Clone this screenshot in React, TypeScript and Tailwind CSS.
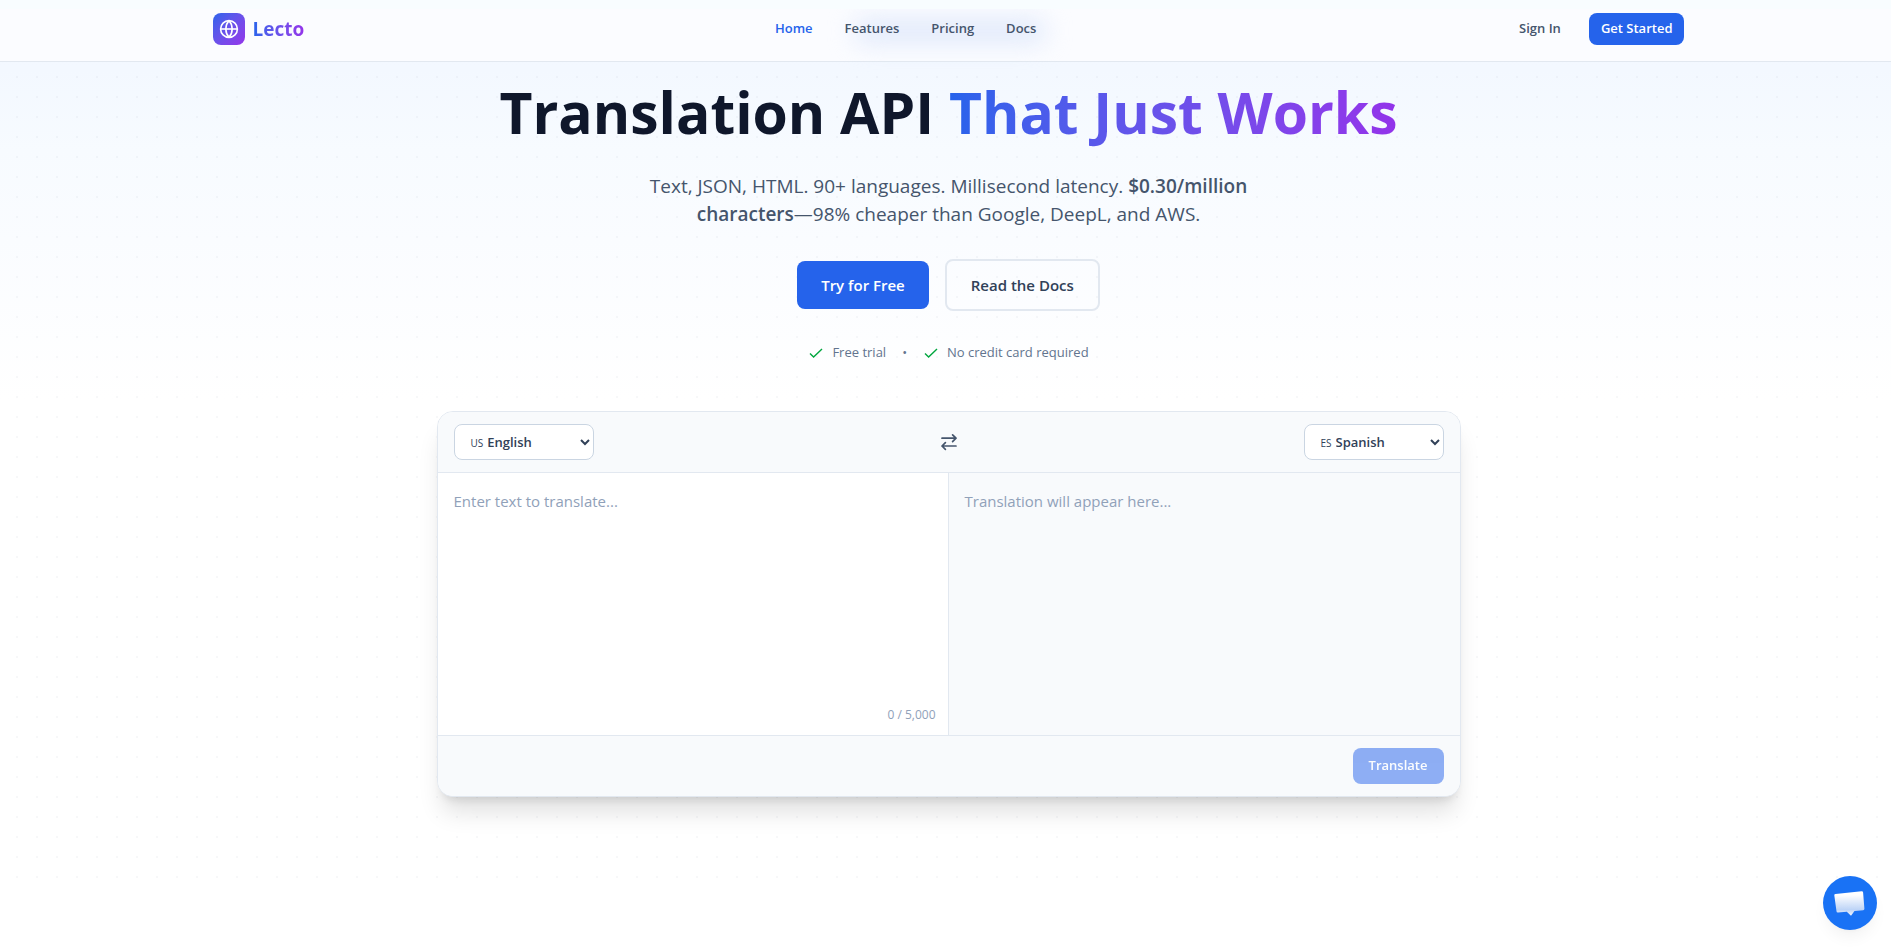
import { useState } from "react";

const NAV_LINKS = [
  { label: "Home", href: "#home", active: true },
  { label: "Features", href: "#features", active: false },
  { label: "Pricing", href: "#pricing", active: false },
  { label: "Docs", href: "#docs", active: false },
];

const LANGUAGES = [
  { code: "US", name: "English" },
  { code: "ES", name: "Spanish" },
  { code: "FR", name: "French" },
  { code: "DE", name: "German" },
];

const MAX_CHARS = 5000;

function GlobeIcon() {
  return (
    <svg viewBox="0 0 20 20" fill="none" stroke="currentColor" strokeWidth="1.6" className="size-5">
      <circle cx="10" cy="10" r="8.4" />
      <path d="M10 1.6c-4.2 4.6-4.2 12.2 0 16.8M10 1.6c4.2 4.6 4.2 12.2 0 16.8" />
      <path d="M1.6 10h16.8" />
    </svg>
  );
}

function CheckIcon() {
  return (
    <svg
      viewBox="0 0 16 16"
      fill="none"
      stroke="currentColor"
      strokeWidth="1.4"
      className="size-4 text-green-600"
    >
      <path d="M2 8.5l3.6 3.5L14 4" />
    </svg>
  );
}

function SwapIcon() {
  return (
    <svg
      viewBox="0 0 20 20"
      fill="none"
      stroke="currentColor"
      strokeWidth="1.7"
      strokeLinecap="round"
      strokeLinejoin="round"
      className="size-5"
    >
      <path d="M3 6.2h14M13.6 2.8L17 6.2l-3.4 3.4" />
      <path d="M17 14H3M6.4 10.6L3 14l3.4 3.4" />
    </svg>
  );
}

function Header() {
  return (
    <header className="relative border-b border-slate-200 bg-[#fbfcff] pl-1.5">
      <div className="pointer-events-none absolute top-[19px] left-1/2 h-6 w-48 -translate-x-[92px] rounded-full bg-[#e0e9fb] blur-[12px]" />
      <div className="absolute inset-x-0 top-0 h-[9px] bg-[#f8fdff]" />
      <div className="relative mx-auto flex max-w-[1536px] items-center justify-between px-8 pt-[13px] pb-4">
        <a href="#home" className="flex items-center gap-2">
          <span className="flex size-8 items-center justify-center rounded-lg bg-gradient-to-br from-[#2563eb] to-[#9333ea] text-white">
            <GlobeIcon />
          </span>
          <span className="bg-gradient-to-r from-[#2563eb] to-[#9333ea] bg-clip-text text-[19px] font-bold text-transparent">
            Lecto
          </span>
        </a>
        <nav className="flex items-center gap-8 text-[13px] font-semibold">
          {NAV_LINKS.map((link) => (
            <a
              key={link.label}
              href={link.href}
              className={link.active ? "text-[#2563eb]" : "text-slate-600"}
            >
              {link.label}
            </a>
          ))}
        </nav>
        <div className="flex items-center gap-4 text-[13px] font-semibold">
          <a href="#signin" className="px-3 text-slate-600">
            Sign In
          </a>
          <a
            href="#start"
            className="flex h-8 items-center rounded-lg bg-[#2563eb] px-3 text-white"
          >
            Get Started
          </a>
        </div>
      </div>
    </header>
  );
}

function Hero() {
  return (
    <section className="text-center">
      <h1 className="pt-5 text-[57px] leading-[60px] font-bold text-slate-900">
        Translation API{" "}
        <span className="bg-gradient-to-r from-[#2563eb] to-[#9333ea] bg-clip-text text-transparent">
          That Just Works
        </span>
      </h1>
      <p className="mx-auto mt-[30px] max-w-2xl text-[19px] leading-7 text-slate-600">
        Text, JSON, HTML. 90+ languages. Millisecond latency.{" "}
        <strong className="font-semibold">
          $0.30/million
          <br />
          characters
        </strong>
        —98% cheaper than Google, DeepL, and AWS.
      </p>
      <div className="mt-[31px] flex items-center justify-center gap-4 text-[15px] font-semibold">
        <a
          href="#try"
          className="flex h-12 items-center rounded-lg bg-[#2563eb] px-6 text-white"
        >
          Try for Free
        </a>
        <a
          href="#docs"
          className="flex h-[52px] items-center rounded-lg border-2 border-slate-200 px-6 text-slate-700"
        >
          Read the Docs
        </a>
      </div>
      <div className="mt-8 flex h-5 items-center justify-center gap-4 text-[13px] text-slate-500">
        <span className="flex items-center gap-2">
          <CheckIcon />
          Free trial
        </span>
        <span>•</span>
        <span className="flex items-center gap-2">
          <CheckIcon />
          No credit card required
        </span>
      </div>
    </section>
  );
}

type LanguageSelectProps = {
  id: string;
  label: string;
  value: string;
  onChange: (code: string) => void;
};

function LanguageSelect({ id, label, value, onChange }: LanguageSelectProps) {
  return (
    <div className="flex h-9 w-[140px] items-center rounded-lg border border-slate-300 bg-white pl-4 text-slate-700">
      <label htmlFor={id} aria-label={label} className="pt-[3px] text-[10px]">
        {value}
      </label>
      <select
        id={id}
        value={value}
        onChange={(e) => onChange(e.target.value)}
        className="h-full min-w-0 flex-1 bg-transparent text-[13px] font-semibold outline-none"
      >
        {LANGUAGES.map((lang) => (
          <option key={lang.code} value={lang.code}>
            {lang.name}
          </option>
        ))}
      </select>
    </div>
  );
}

function Translator() {
  const [source, setSource] = useState("US");
  const [target, setTarget] = useState("ES");
  const [text, setText] = useState("");

  function swap() {
    setSource(target);
    setTarget(source);
  }

  return (
    <section className="mx-auto mt-12 max-w-5xl overflow-hidden rounded-2xl border border-slate-200 bg-white shadow-[0_20px_25px_-5px_rgb(0_0_0/0.12),0_8px_10px_-6px_rgb(0_0_0/0.12)]">
      <div className="flex items-center justify-between border-b border-slate-200 bg-slate-50 px-4 py-3">
        <LanguageSelect id="source" label="Source language" value={source} onChange={setSource} />
        <button type="button" aria-label="Swap languages" onClick={swap} className="text-slate-600">
          <SwapIcon />
        </button>
        <LanguageSelect id="target" label="Target language" value={target} onChange={setTarget} />
      </div>
      <div className="grid h-[262px] grid-cols-2">
        <div className="relative border-r border-slate-200">
          <textarea
            aria-label="Text to translate"
            placeholder="Enter text to translate..."
            maxLength={MAX_CHARS}
            value={text}
            onChange={(e) => setText(e.target.value)}
            className="block h-full w-full resize-none p-4 text-[15px] leading-6 text-slate-700 outline-none placeholder:text-slate-400"
          />
          <span className="absolute right-3 bottom-3 text-xs text-slate-400">
            {text.length} / {MAX_CHARS.toLocaleString("en-US")}
          </span>
        </div>
        <div className="bg-slate-50 p-4 text-[15px] leading-6 text-slate-400">
          Translation will appear here...
        </div>
      </div>
      <div className="flex justify-end border-t border-slate-200 bg-slate-50 px-4 py-3">
        <button
          type="button"
          disabled={text.length === 0}
          className="h-9 rounded-lg bg-[#2563eb] px-4 text-[13px] font-semibold text-white disabled:opacity-50"
        >
          Translate
        </button>
      </div>
    </section>
  );
}

function ChatButton() {
  return (
    <button
      type="button"
      aria-label="Open chat"
      className="fixed right-3.5 bottom-[19px] size-[54px] rounded-full bg-[#1972f5] shadow-lg shadow-black/5"
    >
      <svg viewBox="0 0 54 54" className="size-full">
        <defs>
          <linearGradient id="bubble" x1="0" y1="0" x2="0" y2="1">
            <stop offset="0.15" stopColor="#ffffff" />
            <stop offset="0.75" stopColor="#bdd4f7" />
            <stop offset="1" stopColor="#f4f8ff" />
          </linearGradient>
        </defs>
        <path
          d="M12.5 18l26-2.7q1.5-.1 1.6 1.2l1.3 16.2q0 1.4-1.2 1.5l-8.700.8-3.500 4.800-4.200-4-8.800.7q-1.400.1-1.500-1.200L11.3 19.3q0-1.200 1.200-1.300z"
          fill="url(#bubble)"
        />
      </svg>
    </button>
  );
}

export default function App() {
  return (
    <div className="min-h-screen bg-white font-['Open_Sans',sans-serif]">
      <div className="bg-[linear-gradient(to_bottom,#f2f7ff,#f3f8ff_70px,#f7fbff_150px,#fafcff_240px,#ffffff_400px)]">
        <Header />
        <div className="bg-[radial-gradient(circle_at_center,rgb(100_116_139/0.05)_1px,transparent_1px)] bg-size-[20px_20px] bg-position-[7px_5px] pb-24 pl-1.5">
          <Hero />
          <Translator />
        </div>
      </div>
      <ChatButton />
    </div>
  );
}
